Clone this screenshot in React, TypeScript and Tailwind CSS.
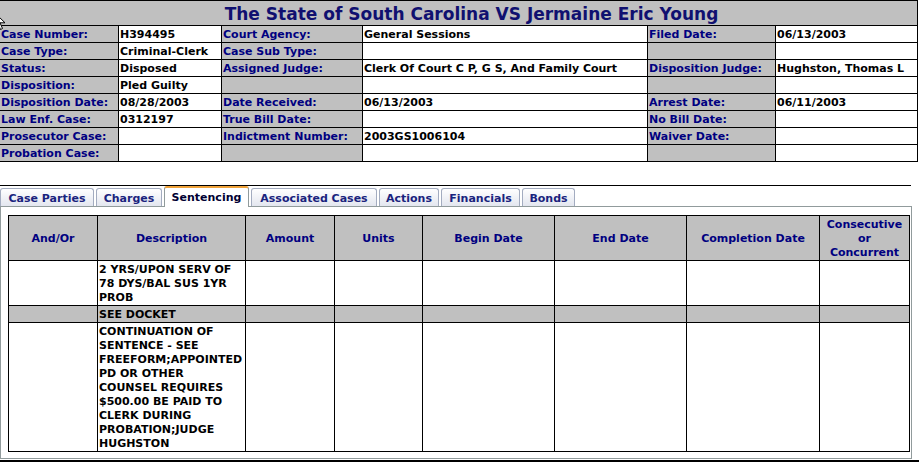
import React from "react";

const rows: string[][] = [
  ["Case Number:", "H394495", "Court Agency:", "General Sessions", "Filed Date:", "06/13/2003"],
  ["Case Type:", "Criminal-Clerk", "Case Sub Type:", "", "", ""],
  ["Status:", "Disposed", "Assigned Judge:", "Clerk Of Court C P, G S, And Family Court", "Disposition Judge:", "Hughston, Thomas L"],
  ["Disposition:", "Pled Guilty", "", "", "", ""],
  ["Disposition Date:", "08/28/2003", "Date Received:", "06/13/2003", "Arrest Date:", "06/11/2003"],
  ["Law Enf. Case:", "0312197", "True Bill Date:", "", "No Bill Date:", ""],
  ["Prosecutor Case:", "", "Indictment Number:", "2003GS1006104", "Waiver Date:", ""],
  ["Probation Case:", "", "", "", "", ""],
];

const tabs = [
  { name: "Case Parties", w: "w-[94px]" },
  { name: "Charges", w: "w-[66px]" },
  { name: "Sentencing", w: "w-[85px]", active: true },
  { name: "Associated Cases", w: "w-[126px]" },
  { name: "Actions", w: "w-[60px]" },
  { name: "Financials", w: "w-[79px]" },
  { name: "Bonds", w: "w-[53px]" },
];

const headers = [
  ["And/Or"],
  ["Description"],
  ["Amount"],
  ["Units"],
  ["Begin Date"],
  ["End Date"],
  ["Completion Date"],
  ["Consecutive", "or", "Concurrent"],
];

function Lines({ lines }: { lines: string[] }) {
  return (
    <>
      {lines.map((l, i) => (
        <div key={i} className="whitespace-nowrap">
          {l}
        </div>
      ))}
    </>
  );
}

export default function App() {
  const sentRows: { h: string; gray: boolean; desc: string[] }[] = [
    { h: "h-[45px]", gray: false, desc: ["2 YRS/UPON SERV OF", "78 DYS/BAL SUS 1YR", "PROB"] },
    { h: "h-[17px]", gray: true, desc: ["SEE DOCKET"] },
    {
      h: "h-[129px]",
      gray: false,
      desc: [
        "CONTINUATION OF",
        "SENTENCE - SEE",
        "FREEFORM;APPOINTED",
        "PD OR OTHER",
        "COUNSEL REQUIRES",
        "$500.00 BE PAID TO",
        "CLERK DURING",
        "PROBATION;JUDGE",
        "HUGHSTON",
      ],
    },
  ];

  return (
    <div className="relative w-[919px] h-[466px] bg-white overflow-hidden font-['DejaVu_Sans',Verdana,sans-serif] text-[11px] font-bold">
      {/* Case header table */}
      <div className="grid grid-cols-[119px_103px_141px_285px_128px_142px] w-[918px]">
        <div className="col-span-6 h-[26px] border-t border-b border-r border-black bg-[#c0c0c0] text-center text-[17px] leading-[26px] text-[#101070] pl-[26px]">
          The State of South Carolina VS Jermaine Eric Young
        </div>
        {rows.map((r, ri) =>
          r.map((c, ci) => {
            const label = ci % 2 === 0;
            return (
              <div
                key={ri + "-" + ci}
                className={
                  "h-[17px] border-b border-r border-black px-[1px] leading-[17px] whitespace-nowrap overflow-hidden " +
                  (label ? "bg-[#c0c0c0] text-[#000080]" : "bg-white text-black")
                }
              >
                {c}
              </div>
            );
          })
        )}
      </div>

      {/* separator line */}
      <div className="mt-[23px] h-[1px] w-[911px] bg-black" />

      {/* tabs */}
      <div className="flex items-end gap-[2px] h-[20px]">
        {tabs.map((t) =>
          t.active ? (
            <div
              key={t.name}
              className={
                t.w +
                " relative z-10 -mb-[1px] h-[21px] bg-white border-x border-[#919b9c] border-t-[2px] border-t-[#f0a33a] rounded-t-[3px] text-center pt-[2px] leading-[16px] text-[#000033]"
              }
            >
              {t.name}
            </div>
          ) : (
            <div
              key={t.name}
              className={
                t.w +
                " h-[18px] border border-b-0 border-[#a3acc0] rounded-t-[3px] bg-linear-to-b from-white to-[#e3e6ef] text-center pt-[2px] leading-[16px] text-[#1a237e]"
              }
            >
              {t.name}
            </div>
          )
        )}
      </div>

      {/* panel */}
      <div className="w-[912px] border border-[#919b9c] pt-[8px] pl-[7px] pb-[6px]">
        <div className="grid grid-cols-[89px_148px_89px_88px_132px_132px_133px_90px] w-[902px] border-l border-t border-black">
          {headers.map((h, i) => (
            <div
              key={i}
              className="h-[45px] border-r border-b border-black bg-[#c0c0c0] text-[#000080] flex flex-col items-center justify-center text-center leading-[14px] pt-[1px]"
            >
              <Lines lines={h} />
            </div>
          ))}
          {sentRows.map((r, ri) =>
            headers.map((_, ci) => (
              <div
                key={ri + "-" + ci}
                className={
                  r.h +
                  " border-r border-b border-black text-black px-[1px] " +
                  (r.gray ? "bg-[#c0c0c0] leading-[17px]" : "bg-white pt-[2px] leading-[14px]")
                }
              >
                {ci === 1 ? <Lines lines={r.desc} /> : null}
              </div>
            ))
          )}
        </div>
      </div>

      {/* bottom line */}
      <div className="mt-[1px] h-[2px] w-[919px] bg-black" />

      {/* mouse cursor */}
      <svg className="absolute left-[-6px] top-[12px]" width="12" height="19" viewBox="0 0 12 19">
        <path d="M0.5 0.5 L0.5 15 L4 11.5 L6.5 17.5 L8.5 16.5 L6 10.8 L11 10.8 Z" fill="white" stroke="black" strokeWidth="1" />
      </svg>
    </div>
  );
}
